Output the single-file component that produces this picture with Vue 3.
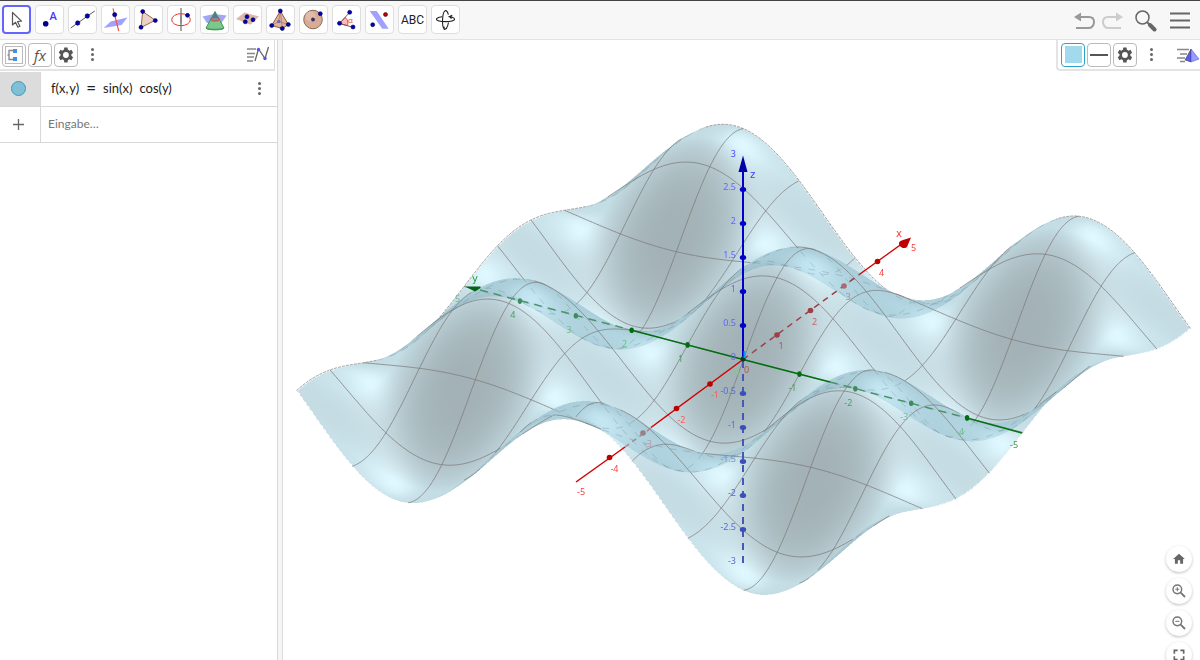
<script setup>
import { onMounted, ref } from 'vue'

const surface = ref(null)

/* Axonometric projection: screen offsets of one unit along each axis. */
const VIEW_X = 283
const VIEW_Y = 40
const VIEW_W = 917
const VIEW_H = 620
const OX = 743.5
const OY = 359.5
const XX = 33.5
const XY = -24.5
const YX = -55.9
const YY = -14.6
const ZY = -68
const LIMIT = 5

const AHEAD = Math.hypot(XX, YX)
const DX = -YX / AHEAD
const DY = XX / AHEAD

const f = (x, y) => Math.sin(x) * Math.cos(y)
const project = (x, y, z) => [OX + XX * x + YX * y, OY + XY * x + YY * y + ZY * z]
const unit = (v) => v.map((c) => c / Math.hypot(...v))
const dot = (a, b) => a[0] * b[0] + a[1] * b[1] + a[2] * b[2]

const eye = unit([-0.77, -0.46, 0.44])
const half = unit([-0.14, -0.38, 1])
const light = half.map((c, i) => 2 * dot(half, eye) * c - eye[i])

const DARK = [113, 137, 143]
const BASE = [164, 201, 213]
const ALPHA = 0.65

function shade(x, y) {
  const n = unit([-Math.cos(x) * Math.cos(y), Math.sin(x) * Math.sin(y), 1])
  const d = Math.max(0, Math.min(1, (dot(light, n) - 0.17) / 0.46))
  const s = Math.pow(Math.max(0, dot(half, n)), 18) * 42
  return DARK.map((c, i) => Math.min(255, c + (BASE[i] - c) * d + s))
}

function hidden(x, y, z) {
  const side = (t) => {
    const a = x - DX * t
    const b = y - DY * t
    if (Math.abs(a) > LIMIT || Math.abs(b) > LIMIT) return null
    const h = z + ((XY * DX + YY * DY) * -t) / -ZY
    return h - f(a, b) < 0
  }
  const first = side(0.12)
  for (let t = 0.16; t < 12; t += 0.04) {
    const s = side(t)
    if (s === null) return false
    if (s !== first) return true
  }
  return false
}

function paintSurface(ctx) {
  const K = 2
  const w = VIEW_W * K
  const h = VIEW_H * K
  const sheet = document.createElement('canvas')
  sheet.width = w
  sheet.height = h
  const sctx = sheet.getContext('2d')
  const image = sctx.createImageData(w, h)
  const data = image.data
  data.fill(255)
  const STEP = 0.03

  for (let i = 0; i < w; i++) {
    const u = ((i + 0.5) / K + VIEW_X - OX) / AHEAD
    const bx = (XX / AHEAD) * u
    const by = (YX / AHEAD) * u
    let prev = null
    /* Far to near, so nearer layers blend over farther ones. */
    for (let t = 7.4; t > -7.4; t -= STEP) {
      const x = bx + DX * t
      const y = by + DY * t
      if (Math.abs(x) > LIMIT || Math.abs(y) > LIMIT) {
        prev = null
        continue
      }
      const row = (OY + XY * x + YY * y + ZY * f(x, y) - VIEW_Y) * K
      const color = shade(x, y)
      if (prev) {
        const down = row > prev.row
        const a = down ? prev.row : row
        const b = down ? row : prev.row
        for (let j = Math.ceil(a); j < Math.ceil(b); j++) {
          if (j < 0 || j >= h) continue
          const m = (j - prev.row) / (row - prev.row)
          const p = (j * w + i) * 4
          for (let k = 0; k < 3; k++) {
            const c = prev.color[k] + (color[k] - prev.color[k]) * m
            data[p + k] = data[p + k] * (1 - ALPHA) + c * ALPHA
          }
        }
      }
      prev = { row, color }
    }
  }
  sctx.putImageData(image, 0, 0)
  ctx.drawImage(sheet, 0, 0, VIEW_W, VIEW_H)
}

function paintGrid(ctx) {
  ctx.save()
  ctx.translate(-VIEW_X, -VIEW_Y)
  const curve = (at, edge) => {
    const runs = []
    let run = null
    for (let s = -LIMIT; s <= LIMIT + 0.001; s += 0.025) {
      const [x, y] = at(Math.min(s, LIMIT))
      const z = f(x, y)
      const behind = hidden(x, y, z)
      const p = project(x, y, z)
      if (!run || run.behind !== behind) {
        const last = run && run.points[run.points.length - 1]
        run = { behind, points: last ? [last] : [] }
        runs.push(run)
      }
      run.points.push(p)
    }
    for (const r of runs) {
      ctx.beginPath()
      r.points.forEach(([a, b]) => ctx.lineTo(a, b))
      ctx.setLineDash(r.behind ? [7, 7] : edge ? [3, 1] : [])
      ctx.strokeStyle = r.behind ? 'rgba(95,125,135,.3)' : edge ? 'rgba(120,120,120,.7)' : 'rgba(125,120,120,.75)'
      ctx.lineWidth = 1
      ctx.stroke()
    }
  }
  for (let k = -LIMIT + 1; k <= LIMIT; k++) {
    curve((s) => [k, s], k === LIMIT)
    curve((s) => [s, k], k === LIMIT)
  }
  ctx.restore()
}

onMounted(() => {
  const ctx = surface.value.getContext('2d')
  paintSurface(ctx)
  paintGrid(ctx)
})

const zLabels = [3, 2.5, 2, 1.5, 1, 0.5, 0, -0.5, -1, -1.5, -2, -2.5, -3].map((v) => ({
  v,
  y: 360 - v * 68 + (v === 3 ? 1 : 0),
  fill: v === -1.5 ? '#7890d8' : v < 0 ? '#5a6bd8' : v < 3 ? '#6464ff' : '#4646ff',
}))
const zTicks = [2.5, 2, 1.5, 1, 0.5, -0.5, -1, -1.5, -2, -2.5].map((v) => ({
  y: 359.5 - v * 68,
  fill: v < 0 ? '#3a50b8' : '#0000c8',
}))

const along = (v, ux, uy) => ({ x: OX + v * ux, y: OY + v * uy })
const xTicks = [-4, -3, -2, -1, 1, 2, 3, 4].map((v) => ({
  ...along(v, XX, XY),
  v,
  label: { '-3': '#b89aa6', '-2': '#ff5a5a', '-1': '#ff5a5a', 1: '#b0585c', 2: '#c0666c', 3: '#c88a92' }[v] || '#f83c3c',
  fill: v === -3 ? '#9a8088' : v === 3 ? '#b06870' : v > 0 && v < 4 ? '#9c4046' : '#be0000',
}))
const yTicks = [-4, -3, -2, -1, 1, 2, 3, 4].map((v) => ({
  ...along(v, YX, YY),
  v,
  label: Math.abs(v) === 1 ? '#4a9a58' : v === -3 || v === -4 || v === 3 || v === 2 ? '#6cc090' : '#4aa066',
  fill: v === -1 || v === 1 || v === 2 || v === -4 ? '#006e10' : '#3c8c5c',
}))

const tools = [
  'Bewege', 'Punkt', 'Gerade', 'Senkrechte Gerade', 'Vieleck', 'Kreis mit Achse', 'Schnittkurve',
  'Ebene durch drei Punkte', 'Pyramide', 'Kugel', 'Winkel', 'Spiegle an Ebene', 'Text', 'Drehe Ansicht',
]
const gear = 'M19.4 13a7.5 7.5 0 0 0 0-2l2.1-1.7-2-3.5-2.5 1a7.4 7.4 0 0 0-1.7-1L14.900 3h-4l-.4 2.800a7.400 7.400 0 0 0-1.700 1l-2.500-1-2 3.500L6.400 11a7.500 7.500 0 0 0 0 2l-2.100 1.700 2 3.500 2.500-1c.500.400 1.100.700 1.700 1l.400 2.800h4l.400-2.800c.600-.300 1.200-.600 1.700-1l2.500 1 2-3.500zM12.900 15.500a3.500 3.500 0 1 1 0-7 3.500 3.500 0 0 1 0 7z'
</script>

<template>
  <div class="app">
    <header class="toolbar">
      <nav class="tools" aria-label="Werkzeuge">
        <button v-for="(name, i) in tools" :key="name" type="button" class="tool" :class="{ active: i === 0 }" :aria-label="name">
          <span v-if="i === 12" class="abc">ABC</span>
          <svg v-else viewBox="1 1 27 27" width="27" height="27">
            <path v-if="i === 0" d="M10.500 7.500V20l3-2.700 2.400 4.900 2-1-2.400-4.700 4-.400z" fill="#fff" stroke="#555" stroke-width="1.200" stroke-linejoin="round" />
            <g v-else-if="i === 1">
              <circle cx="10.700" cy="18.700" r="2.800" fill="#00008c" />
              <text x="14.500" y="15" font-size="11" font-weight="600" fill="#3c3cff">A</text>
            </g>
            <g v-else-if="i === 2">
              <path d="M2.700 23 26.700 6" stroke="#555" />
              <circle cx="9.700" cy="18" r="2.200" class="pt" /><circle cx="19.300" cy="11" r="2.200" class="pt" />
            </g>
            <g v-else-if="i === 3">
              <path d="M2.700 23 9.700 16.500l16.800-4-6 7.500z" fill="#a0a0ff" />
              <path d="M12 3.300 17.700 26" stroke="#f05050" stroke-width="1.200" />
              <circle cx="13.700" cy="9.700" r="2.100" class="pt" />
            </g>
            <g v-else-if="i === 4">
              <path d="M8.700 6.500 21.300 15.300 7 22.500z" fill="#ead2c6" stroke="#a0644a" />
              <circle cx="8.700" cy="6.500" r="2" class="pt" /><circle cx="21.300" cy="15.500" r="2" class="pt" /><circle cx="7" cy="22.300" r="2" class="pt" />
            </g>
            <g v-else-if="i === 5" fill="none">
              <path d="M14 3v23" stroke="#777" stroke-width="1.300" />
              <ellipse cx="14" cy="14.700" rx="9.300" ry="6" stroke="#f03030" />
              <path d="M14 9.500v9" stroke="#777" />
              <circle cx="20.500" cy="10.300" r="2" class="pt" />
            </g>
            <g v-else-if="i === 6">
              <path d="M2.500 11.500 14 9l12.700 1.500L21 18.500 7 18z" fill="#a0a8f4" />
              <path d="M15 6.500 24 23c-1 2.500-17 2.500-18 0z" fill="#7cc88c" stroke="#3a9a50" />
              <path d="M11.500 13.500 15 7l3.500 6.500z" fill="#567a8c" />
              <ellipse cx="15" cy="14.300" rx="4.500" ry="1.800" fill="#6a9c9c" stroke="#e04040" />
              <path d="M6 23c2 1.800 16 1.800 18 0" fill="none" stroke="#3a9a50" />
            </g>
            <g v-else-if="i === 7">
              <path d="M3 14 11.500 7.500 26 11.500 17.500 19.700z" fill="#dcb8a8" />
              <circle cx="14" cy="11.700" r="2" class="pt" /><circle cx="20" cy="14.700" r="2" class="pt" /><circle cx="12.300" cy="16.800" r="2" class="pt" />
            </g>
            <g v-else-if="i === 8">
              <path d="M14.300 6 5.700 20.500 16.300 23.500 22.300 19.500z" fill="#dcb4a2" stroke="#98583c" />
              <path d="M14.300 6l2 17.500M5.700 20.500l7-4 9.600 3M12.700 16.500 14.300 6" fill="none" stroke="#b07860" stroke-width=".8" />
              <circle cx="12.700" cy="16.500" r="1.700" fill="#7068a8" />
              <circle cx="14.300" cy="6" r="2" class="pt" /><circle cx="5.700" cy="20.500" r="2" class="pt" /><circle cx="22.300" cy="19.500" r="2" class="pt" /><circle cx="16.300" cy="23.500" r="2" class="pt" />
            </g>
            <g v-else-if="i === 9">
              <circle cx="14" cy="14.500" r="9.300" fill="#d8ac94" stroke="#8a6a58" />
              <circle cx="11.500" cy="11.500" r="5" fill="#e0bca8" />
              <circle cx="14" cy="14.500" r="1.900" fill="#38306c" /><circle cx="21.300" cy="8.700" r="2" class="pt" />
            </g>
            <g v-else-if="i === 10">
              <path d="M7.500 18.500 13 12.500c3 2 3.500 5 2.300 8z" fill="#ffb8b8" stroke="#f04040" />
              <path d="M17.700 7.300 7.500 18.500 21 22.300" fill="none" stroke="#666" />
              <text x="16" y="18" font-size="8" fill="#f04040">α</text>
              <circle cx="7.500" cy="18.300" r="2" class="pt" /><circle cx="17.700" cy="7.300" r="2" class="pt" /><circle cx="21" cy="22" r="2" class="pt" />
            </g>
            <g v-else-if="i === 11">
              <path d="M4.700 6h7l12 17.700h-6.400z" fill="#a0a0ff" />
              <circle cx="7.700" cy="19.700" r="2" class="pt" /><circle cx="20.500" cy="9.500" r="2" fill="#c00000" stroke="#400000" stroke-width=".6" />
            </g>
            <g v-else fill="none" stroke="#222" stroke-width="1.100">
              <path d="M11 11.800C7 12.500 5 13.300 5.500 14.500c1 2.800 17 2.800 18 0 .400-1.200-1.500-2.200-5-2.900l2.800-1.300M18.500 11.600l2 2" />
              <path d="M17.500 17.500c-1 5.500-3 7.500-4.300 6.500-2.500-2-2.200-17 1-18.300 1.500-.400 2.600 1.500 3.200 4M13 21.500l.300 3 2.700-1.300" />
            </g>
          </svg>
        </button>
      </nav>
      <div class="actions">
        <button type="button" class="plain undo" aria-label="Rückgängig">
          <svg width="22" height="22" viewBox="0 0 22 22" fill="none"><path d="M7 7h8c3.500 0 5 2.500 5 5s-1.500 6-5 6H2" stroke="#999" stroke-width="2" /><path d="M0 7 7 2.500v9z" fill="#999" /></svg>
        </button>
        <button type="button" class="plain redo" aria-label="Wiederherstellen">
          <svg width="22" height="22" viewBox="0 0 22 22" fill="none"><path d="M15 7H7c-3.500 0-5 2.500-5 5s1.500 6 5 6h13" stroke="#ccc" stroke-width="2" /><path d="M22 7 15 2.500v9z" fill="#ccc" /></svg>
        </button>
        <button type="button" class="plain search" aria-label="Suche">
          <svg width="22" height="22" viewBox="0 0 22 22" fill="none"><circle cx="7.500" cy="7.500" r="6.500" stroke="#666" stroke-width="1.500" /><path d="M12.500 12.500 15 15" stroke="#666" stroke-width="2" /><path d="M15 15l4.500 4.500" stroke="#666" stroke-width="4" stroke-linecap="round" /></svg>
        </button>
        <button type="button" class="plain" aria-label="Menü">
          <svg width="20" height="18" viewBox="0 0 20 18"><path d="M0 1.500h20M0 8.500h20M0 15.500h20" stroke="#666" stroke-width="2" /></svg>
        </button>
      </div>
    </header>

    <main class="body">
      <section class="algebra" aria-label="Algebra">
        <div class="stylebar">
          <button type="button" class="mini" aria-label="Hilfsobjekte">
            <svg width="22" height="22" viewBox="0 0 22 22" fill="none"><rect x="2.500" y="2.500" width="17" height="17" fill="#fff" stroke="#bbb" /><path d="M10 6.500H6v9h4M6 11H4.500" stroke="#888" stroke-width="1.300" /><path d="M10 5h4v4h-4zM10 13h4v4h-4z" fill="#4a90d9" /></svg>
          </button>
          <button type="button" class="mini fx" aria-label="Beschreibung">fx</button>
          <button type="button" class="mini" aria-label="Einstellungen">
            <svg width="20" height="20" viewBox="1 0 24 24"><path :d="gear" fill="#555" fill-rule="evenodd" /></svg>
          </button>
          <button type="button" class="plain kebab" aria-label="Mehr"><i></i><i></i><i></i></button>
          <button type="button" class="plain views" aria-label="Ansichten">
            <svg width="24" height="18" viewBox="0 0 24 18" fill="none"><path d="M0 3h9M0 7.500h8M0 11h7M0 15h6" stroke="#888" stroke-width="1.500" /><path d="M8 15 11.500 3 18 12.500 21.500 1" stroke="#666" stroke-width="1.300" /><circle cx="11.500" cy="3.500" r="1.700" fill="#5555dd" /><circle cx="18" cy="12.500" r="1.700" fill="#5555dd" /></svg>
          </button>
        </div>
        <ul class="rows">
          <li class="row">
            <button type="button" class="marble" aria-label="Objekt anzeigen"><b></b></button>
            <span class="formula"><span>f(x,&#8202;y)</span><span class="eq">=</span><span>sin(x)</span><span>cos(y)</span></span>
            <button type="button" class="plain kebab" aria-label="Optionen"><i></i><i></i><i></i></button>
          </li>
          <li class="row">
            <button type="button" class="marble add" aria-label="Hinzufügen">
              <svg width="11" height="11" viewBox="0 0 11 11"><path d="M5.500 0v11M0 5.500h11" stroke="#666" stroke-width="1.300" /></svg>
            </button>
            <input class="entry" type="text" placeholder="Eingabe…" aria-label="Eingabe" />
          </li>
        </ul>
      </section>
      <div class="splitter"></div>

      <section class="plot" aria-label="3D Grafik">
        <canvas ref="surface" class="layer" :width="VIEW_W" :height="VIEW_H"></canvas>
        <svg class="layer" viewBox="283 40 917 620" fill="none">
          <g stroke-width="2">
            <path d="M743 359V170" stroke="#0000c8" />
            <path d="M743 361V563" stroke="#4458b8" stroke-dasharray="7 6" />
          </g>
          <path d="M743 155.500 747.500 172h-9z" fill="#0000a8" />
          <g stroke-width="1.500">
            <path d="M743 359.500 860 274" stroke="#9c4046" stroke-dasharray="6 5" />
            <path d="M860 274 903 243" stroke="#d00000" />
            <path d="M576 482 625 447" stroke="#d00000" />
            <path d="M625 447 651 428" stroke="#a88890" stroke-dasharray="5 4" />
            <path d="M651 427.500 743 359.500" stroke="#d00000" />
            <path d="M631 330 743 359.500 830 382" stroke="#006e10" />
            <path d="M830 382 967 418" stroke="#4c9468" stroke-dasharray="8 6" />
            <path d="M967 418 1022 433" stroke="#007410" />
            <path d="M480 290 631 330" stroke="#4c9468" stroke-dasharray="8 6" />
          </g>
          <path d="M911 237.500 907 247a5 5 0 0 1-8-3q-.500-3 4-4z" fill="#c00000" />
          <path d="M465 286.500h15.500v1.500L475 291.500z" fill="#006414" />
          <ellipse v-for="t in zTicks" :key="t.y" cx="743" :cy="t.y" rx="3.200" ry="2.500" :fill="t.fill" />
          <g v-for="t in xTicks" :key="'x' + t.v">
            <circle :cx="t.x" :cy="t.y" r="2.800" :fill="t.fill" />
            <text :x="t.x + (t.v < 0 ? 5 : 4)" :y="t.y + 14" text-anchor="middle" :fill="t.label">{{ t.v }}</text>
          </g>
          <g v-for="t in yTicks" :key="'y' + t.v">
            <ellipse :cx="t.x" :cy="t.y" rx="2.200" ry="2.800" :fill="t.fill" />
            <text :x="t.x - 7" :y="t.y + 17" text-anchor="middle" :fill="t.label">{{ t.v }}</text>
          </g>
          <circle cx="743" cy="359" r="2.500" fill="#103a20" />
          <path d="M744.500 351v7" stroke="#00a0ff" stroke-width="2" />
          <text v-for="l in zLabels" :key="l.v" x="736" :y="l.y" text-anchor="end" :fill="l.fill">{{ l.v }}</text>
          <text x="744" y="373" fill="#a85860">0</text>
          <text x="734" y="375" fill="#7cc88c">0</text>
          <text x="911" y="251" fill="#f83c3c">5</text>
          <text x="577" y="495" fill="#f83c3c">-5</text>
          <text x="1010" y="448" fill="#3c9c44">-5</text>
          <text x="455" y="302" fill="#6cc090">5</text>
          <text x="750" y="178" class="name" fill="#3c3cff">z</text>
          <text x="896" y="237" class="name" fill="#f83c3c">x</text>
          <text x="472" y="282" class="name" fill="#2c9c34">y</text>
        </svg>

        <div class="stylebar right">
          <button type="button" class="mini picked" aria-label="Farbe"><span class="swatch"></span></button>
          <button type="button" class="mini" aria-label="Linienstil"><span class="dash"></span></button>
          <button type="button" class="mini" aria-label="Einstellungen">
            <svg width="20" height="20" viewBox="1 0 24 24"><path :d="gear" fill="#555" fill-rule="evenodd" /></svg>
          </button>
          <button type="button" class="plain kebab" aria-label="Mehr"><i></i><i></i><i></i></button>
          <button type="button" class="plain views" aria-label="Ansichten">
            <svg width="23" height="16" viewBox="0 0 23 16"><path d="M0 2.500h12M3 7h7M0 11h8M3 14.500h5" stroke="#888" stroke-width="1.500" /><path d="M14 2 8 13l6 2z" fill="#5a5af0" stroke="#333" stroke-width=".5" /><path d="M14 2v13l8-3z" fill="#9a9aff" stroke="#4444c8" stroke-width=".5" /></svg>
          </button>
        </div>

        <div class="floats">
          <button type="button" class="round" aria-label="Standardansicht">
            <svg width="14" height="14" viewBox="0 0 24 24"><path d="M10 20v-6h4v6h5v-8h3L12 3 2 12h3v8z" fill="#666" /></svg>
          </button>
          <button type="button" class="round" aria-label="Vergrößern">
            <svg width="16" height="16" viewBox="0 0 24 24" fill="none" stroke="#777"><circle cx="9.500" cy="9.500" r="6.500" stroke-width="2.200" /><path d="M14.500 14.500 21 21" stroke-width="2.800" /><path d="M6.500 9.500h6M9.500 6.500v6" stroke-width="1.600" /></svg>
          </button>
          <button type="button" class="round" aria-label="Verkleinern">
            <svg width="16" height="16" viewBox="0 0 24 24" fill="none" stroke="#777"><circle cx="9.500" cy="9.500" r="6.500" stroke-width="2.200" /><path d="M14.500 14.500 21 21" stroke-width="2.800" /><path d="M6.500 9.500h6" stroke-width="1.600" /></svg>
          </button>
          <button type="button" class="round" aria-label="Vollbild">
            <svg width="16" height="16" viewBox="0 0 24 24" fill="none"><path d="M5 10V5h5M14 5h5v5M5 14v5h5M14 19h5v-5" stroke="#666" stroke-width="2.500" /></svg>
          </button>
        </div>
      </section>
    </main>
  </div>
</template>

<style>
body {
  overflow: hidden;
}
</style>

<style scoped>
.app {
  display: flex;
  flex-direction: column;
  height: 100vh;
  background: #fff;
  font-family: "Open Sans", "Noto Sans", sans-serif;
  color: #222;
}
button {
  font: inherit;
  color: inherit;
  padding: 0;
  margin: 0;
  cursor: pointer;
}
svg {
  display: block;
  flex: none;
}
.toolbar {
  box-sizing: border-box;
  flex: none;
  display: flex;
  justify-content: space-between;
  height: 40px;
  padding: 4px 10px 0 2px;
  border-top: 1px solid #444;
  border-bottom: 1px solid #e2e2e2;
  background: #f7f7f8;
}
.tools {
  display: flex;
  gap: 4px;
}
.tool {
  box-sizing: border-box;
  display: flex;
  align-items: center;
  justify-content: center;
  width: 29px;
  height: 29px;
  border: 1px solid #dedede;
  border-radius: 4px;
  background: #fff;
}
.tool.active {
  border: 2px solid #6464ff;
}
.pt {
  fill: #0000c0;
  stroke: #00003c;
  stroke-width: 0.6;
}
.abc {
  font: 12px Roboto, sans-serif;
}
.plain {
  border: 0;
  background: none;
}
.actions {
  display: flex;
  align-items: center;
  height: 31px;
}
.undo {
  margin-right: 5px;
}
.redo {
  margin-right: 12px;
}
.search {
  margin-right: 13px;
}
.body {
  flex: 1;
  min-height: 0;
  display: flex;
}
.algebra {
  box-sizing: border-box;
  flex: none;
  width: 278px;
  border-right: 1px solid #d8d8d8;
}
.stylebar {
  box-sizing: border-box;
  display: flex;
  align-items: center;
  height: 31px;
  margin-right: 2px;
  padding: 0 3px 0 2px;
  gap: 2px;
  border-right: 1px solid #ddd;
  border-bottom: 2px solid #e4e4e4;
}
.mini {
  box-sizing: border-box;
  display: flex;
  align-items: center;
  justify-content: center;
  width: 24px;
  height: 24px;
  border: 1px solid #bbb;
  border-radius: 4px;
  background: #fff;
}
.fx {
  font: italic 15px "Open Sans", sans-serif;
  color: #555;
  line-height: 20px;
}
.kebab {
  display: flex;
  flex-direction: column;
  align-items: center;
  gap: 2px;
  width: 24px;
}
.kebab i {
  width: 3px;
  height: 3px;
  border-radius: 50%;
  background: #666;
}
.views {
  margin-left: auto;
}
.rows {
  list-style: none;
  margin: 1px 0 0;
  padding: 0;
}
.row {
  box-sizing: border-box;
  display: flex;
  align-items: stretch;
  height: 35px;
  border-bottom: 1px solid #d8d8d8;
}
.row + .row {
  height: 36px;
}
.marble {
  box-sizing: border-box;
  display: flex;
  align-items: center;
  justify-content: center;
  width: 41px;
  padding: 0 3px 2px 0;
  border: 0;
  border-right: 1px solid #d8d8d8;
  background: #dcdcdc;
}
.marble b {
  box-sizing: border-box;
  width: 15px;
  height: 15px;
  border: 1px solid #3a9cba;
  border-radius: 50%;
  background: #80bfd6;
}
.marble.add {
  padding-bottom: 0;
  background: #fff;
}
.formula {
  flex: 1;
  display: flex;
  align-items: center;
  gap: 7px;
  padding: 0 0 2px 10px;
  font: 13px Lato, sans-serif;
}
.eq {
  font-size: 17px;
  line-height: 16px;
}
.row .kebab {
  justify-content: center;
  padding-bottom: 2px;
  margin-right: 6px;
}
.entry {
  flex: 1;
  min-width: 0;
  padding: 0 7px 2px;
  border: 0;
  outline: 0;
  background: none;
  font: 12px Lato, sans-serif;
}
.entry::placeholder {
  color: #777;
  opacity: 1;
}
.splitter {
  flex: none;
  box-sizing: border-box;
  width: 5px;
  border-right: 1px solid #ddd;
  background: #f5f5f5;
}
.plot {
  position: relative;
  flex: 1;
  min-width: 0;
  overflow: hidden;
}
.layer {
  position: absolute;
  inset: 0;
  width: 100%;
  height: 100%;
  object-fit: contain;
}
.layer text {
  font: 9px "Noto Sans", sans-serif;
}
.layer .name {
  font: 10px "DejaVu Sans", sans-serif;
}
.stylebar.right {
  position: absolute;
  top: 0;
  right: 0;
  width: 144px;
  margin: 0;
  padding: 0 0 0 3px;
  border-right: 0;
  border-left: 2px solid #e4e4e4;
  border-radius: 0 0 0 4px;
  background: #fff;
}
.mini.picked {
  border-color: #2ea3c8;
}
.swatch {
  width: 17px;
  height: 17px;
  background: #a3d9ec;
}
.dash {
  width: 18px;
  height: 2px;
  background: #555;
}
.floats {
  position: absolute;
  top: 506px;
  right: 8px;
  display: flex;
  flex-direction: column;
  gap: 6px;
}
.round {
  display: flex;
  align-items: center;
  justify-content: center;
  width: 26px;
  height: 26px;
  border: 0;
  border-radius: 50%;
  background: #fff;
  box-shadow: 0 1px 3px rgba(0, 0, 0, 0.25);
}
</style>
